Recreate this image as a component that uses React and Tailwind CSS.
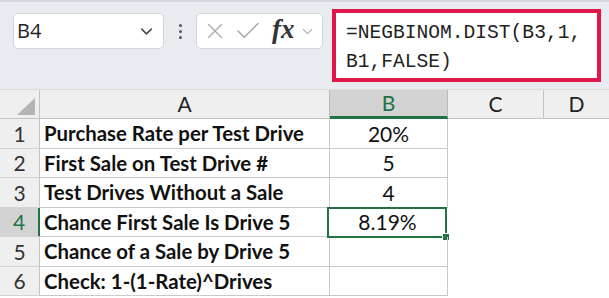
import { ChevronDown, X, Check } from 'lucide-react';

const rows = [
    { n: 1, label: 'Purchase Rate per Test Drive', value: '20%', h: 'h-[30px]' },
    { n: 2, label: 'First Sale on Test Drive #', value: '5', h: 'h-[29px]' },
    { n: 3, label: 'Test Drives Without a Sale', value: '4', h: 'h-[30px]' },
    { n: 4, label: 'Chance First Sale Is Drive 5', value: '8.19%', h: 'h-[29px]', selected: true },
    { n: 5, label: 'Chance of a Sale by Drive 5', value: '', h: 'h-[30px]' },
    { n: 6, label: 'Check: 1-(1-Rate)^Drives', value: '', h: 'h-[29px]' },
];

export default function App() {
    return (
        <div className="w-[609px] h-[298px] overflow-hidden bg-white flex flex-col" style={{ fontFamily: '"Open Sans", sans-serif' }}>
            {/* Formula bar */}
            <div className="h-[90px] shrink-0 bg-[#e8ebf0] border-t-2 border-[#d3d7dd] border-b border-b-[#d9dcdf] flex items-start pl-[13px]">
                <div className="mt-[11px] w-[151px] h-[36px] bg-white border border-[#d3d6da] rounded-[5px] flex items-center justify-between pl-[3px] pr-[7px]">
                    <span className="text-[20px] text-[#222] leading-none">B4</span>
                    <ChevronDown size={19} strokeWidth={1.8} className="text-[#444]" />
                </div>
                <div className="w-[32px] h-[36px] mt-[11px] flex flex-col items-center justify-center gap-[3px]">
                    <span className="w-[3px] h-[3px] rounded-full bg-[#555]" />
                    <span className="w-[3px] h-[3px] rounded-full bg-[#555]" />
                    <span className="w-[3px] h-[3px] rounded-full bg-[#555]" />
                </div>
                <div className="mt-[11px] w-[127px] h-[36px] bg-white border border-[#d3d6da] rounded-[5px] flex items-center pl-[5px]">
                    <X size={26} strokeWidth={1.2} className="text-[#a8a8a8]" />
                    <Check size={30} strokeWidth={1.2} className="text-[#a8a8a8] ml-[5px]" />
                    <span className="ml-[9px] text-[27px] italic font-bold text-[#333] leading-none -mt-[4px]" style={{ fontFamily: '"Liberation Serif", serif' }}>fx</span>
                    <ChevronDown size={17} strokeWidth={1.5} className="text-[#aaa] ml-[4px]" />
                </div>
                <div className="ml-[9px] mt-[7px] w-[269px] h-[73px] bg-white border-[4px] border-[#e0184a] pl-[10px] pt-[6px] text-[19.6px] leading-[29px] text-[#222]" style={{ fontFamily: '"Liberation Mono", monospace' }}>
                    <div>=NEGBINOM.DIST(B3,1,</div>
                    <div>B1,FALSE)</div>
                </div>
            </div>

            {/* Grid */}
            <div className="flex flex-col text-[#111]" style={{ fontFamily: 'Lato, sans-serif' }}>
                <div className="flex h-[29px] bg-[#efefef] border-b border-[#c4c4c4]">
                    <div className="w-[40px] shrink-0 border-r border-[#c4c4c4] relative">
                        <div className="absolute left-[17px] top-[8px] w-0 h-0 border-l-[18px] border-l-transparent border-b-[17px] border-b-[#b4b4b4]" />
                    </div>
                    <div className="w-[290px] shrink-0 border-r border-[#b8b8b8] flex items-center justify-center text-[21px] text-[#222]">A</div>
                    <div className="w-[118px] shrink-0 bg-[#d3d3d3] border-r border-[#b8b8b8] border-b-[3px] border-b-[#217346] -mb-px flex items-center justify-center text-[21px] text-[#217346]">B</div>
                    <div className="w-[96px] shrink-0 border-r border-[#c4c4c4] flex items-center justify-center text-[21px] text-[#222]">C</div>
                    <div className="flex-1 flex items-center justify-center text-[21px] text-[#222]">D</div>
                </div>
                {rows.map(r => (
                    <div key={r.n} className={`flex ${r.h}`}>
                        <div className={`w-[40px] shrink-0 border-b border-[#d4d4d4] flex items-center justify-center text-[21px] ${r.selected ? 'bg-[#d3d3d3] text-[#217346] border-r-[2px] border-r-[#217346]' : 'bg-[#efefef] text-[#333] border-r border-r-[#c4c4c4]'}`}>{r.n}</div>
                        <div className={`w-[290px] shrink-0 border-r border-b border-[#c9c9c9] flex items-center pl-[4px] text-[20.4px] font-bold ${r.selected ? '-ml-px pl-[5px]' : ''}`}>{r.label}</div>
                        <div className="w-[118px] shrink-0 border-r border-b border-[#c9c9c9] flex items-center justify-center text-[21px] relative">
                            {r.value}
                            {r.selected && (
                                <div className="absolute -left-[2px] -top-[1px] w-[120px] h-[31px] border-[2px] border-[#217346]">
                                    <div className="absolute -right-[5px] -bottom-[5px] w-[8px] h-[8px] bg-[#217346] border border-white" />
                                </div>
                            )}
                        </div>
                        <div className="flex-1" />
                    </div>
                ))}
            </div>
        </div>
    );
}
